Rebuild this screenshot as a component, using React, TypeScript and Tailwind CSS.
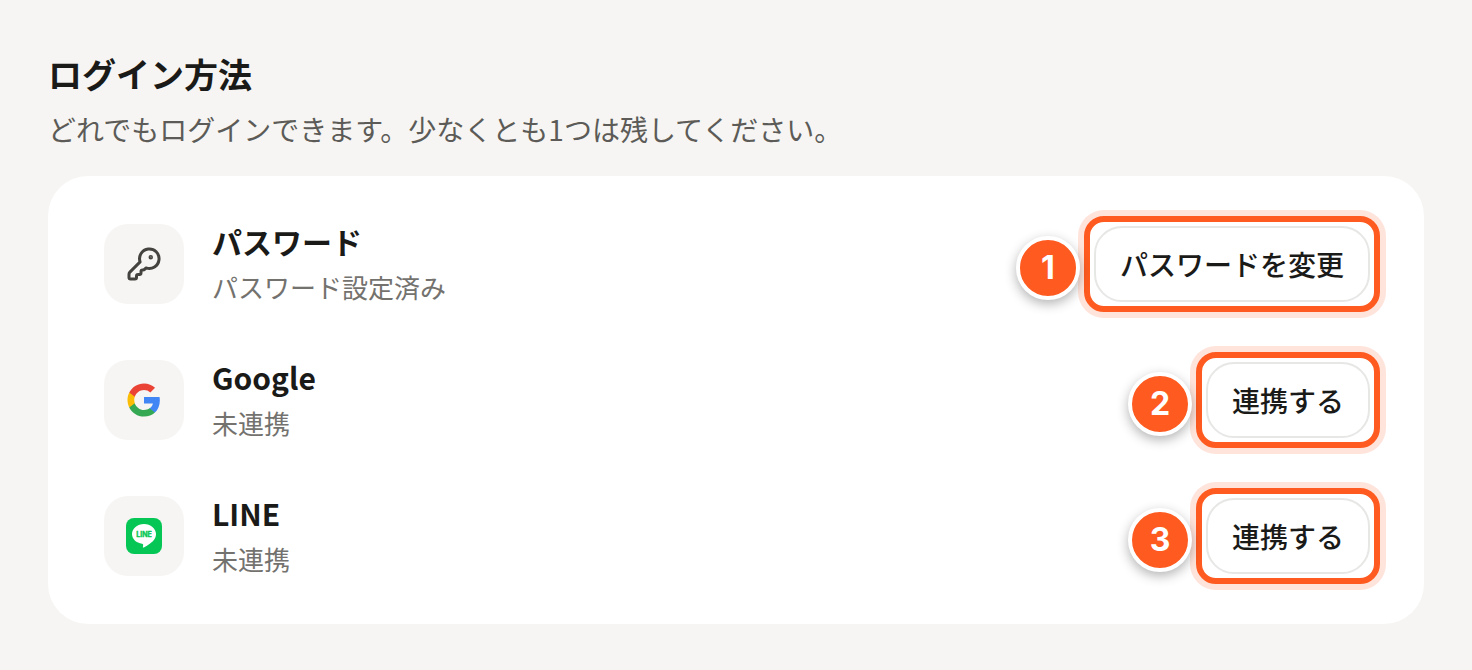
import type { ReactNode } from "react";
import { KeyRound } from "lucide-react";

interface LoginMethod {
  id: string;
  name: string;
  status: string;
  action: string;
  icon: ReactNode;
}

function GoogleIcon() {
  return (
    <svg viewBox="0 0 24 24" className="size-9" aria-hidden="true">
      <path
        fill="#4285F4"
        d="M22.56 12.25c0-.78-.07-1.53-.2-2.25H12v4.26h5.92c-.26 1.37-1.04 2.53-2.21 3.31v2.77h3.57c2.08-1.92 3.28-4.74 3.28-8.09z"
      />
      <path
        fill="#34A853"
        d="M12 23c2.97 0 5.46-.98 7.28-2.66l-3.57-2.77c-.98.66-2.23 1.06-3.71 1.06-2.86 0-5.29-1.93-6.16-4.53H2.18v2.84C3.99 20.53 7.7 23 12 23z"
      />
      <path
        fill="#FBBC05"
        d="M5.84 14.09c-.22-.66-.35-1.36-.35-2.09s.13-1.43.35-2.09V7.07H2.18C1.43 8.55 1 10.22 1 12s.43 3.45 1.18 4.93l3.66-2.84z"
      />
      <path
        fill="#EA4335"
        d="M12 5.38c1.62 0 3.06.56 4.21 1.64l3.15-3.15C17.45 2.09 14.97 1 12 1 7.7 1 3.99 3.47 2.18 7.07l3.66 2.84c.87-2.6 3.3-4.53 6.16-4.53z"
      />
    </svg>
  );
}

function LineIcon() {
  return (
    <svg viewBox="0 0 36 36" className="size-9" aria-hidden="true">
      <rect width="36" height="36" rx="8" fill="#06C755" />
      <path
        fill="#fff"
        d="M30 16C30 10.6 24.6 6 18 6S6 10.600 6 16c0 4.900 4.300 9 10.100 9.800 .4.1.9.3 1 .6.1.3.1.8 0 1.200l-.2 1.100c0 .3-.2 1.300 1.100.7 1.300-.6 7.100-4.200 9.700-7.200C29.300 20.200 30 18.200 30 16z"
      />
      <text
        x="18"
        y="19"
        textAnchor="middle"
        fill="#06C755"
        stroke="#06C755"
        strokeWidth="0.4"
        fontFamily="Inter, sans-serif"
        fontWeight="700"
        fontSize="7"
      >
        LINE
      </text>
    </svg>
  );
}

const methods: LoginMethod[] = [
  {
    id: "password",
    name: "パスワード",
    status: "パスワード設定済み",
    action: "パスワードを変更",
    icon: <KeyRound className="size-9 text-[#44433f]" aria-hidden="true" />,
  },
  {
    id: "google",
    name: "Google",
    status: "未連携",
    action: "連携する",
    icon: <GoogleIcon />,
  },
  {
    id: "line",
    name: "LINE",
    status: "未連携",
    action: "連携する",
    icon: <LineIcon />,
  },
];

// Action button with the orange guide frame and its step number
function GuidedAction({ step, method }: { step: number; method: LoginMethod }) {
  return (
    <div className="relative -my-2 shrink-0 rounded-[20px] border-6 border-[#ff5a1f] p-1 shadow-[0_0_0_6px_rgba(255,90,31,0.16)]">
      <button
        type="button"
        aria-describedby={`${method.id}-name`}
        className="block h-19 cursor-pointer rounded-[28px] border-2 border-[#e7e7e6] bg-white px-6 text-[28px] font-medium whitespace-nowrap text-[#1a1a18]"
      >
        {method.action}
      </button>
      <span className="absolute top-3.5 right-full mr-2.5 flex size-16 items-center justify-center rounded-full border-4 border-white bg-[#ff5a1f] font-['Inter',sans-serif] text-[32px] leading-none font-bold text-white shadow-[0_4px_12px_rgba(0,0,0,0.3)]">
        {step}
      </span>
    </div>
  );
}

export default function App() {
  return (
    <main
      lang="ja"
      className="min-h-screen bg-[#f6f5f3] p-12 font-['Noto_Sans_CJK_JP',sans-serif] text-[#1a1a18]"
    >
      <h1 className="text-[34px] leading-13 font-bold">ログイン方法</h1>
      <p className="mt-2 text-[28px] leading-[42px] text-[#5c5b57]">
        どれでもログインできます。少なくとも1つは残してください。
      </p>

      <ul className="mt-[26px] flex flex-col gap-14 rounded-[40px] bg-white py-12 pr-11 pl-14">
        {methods.map((method, i) => (
          <li key={method.id} className="flex items-center gap-7">
            <div className="flex size-20 shrink-0 items-center justify-center rounded-3xl bg-[#f6f5f3]">
              {method.icon}
            </div>
            <div className="flex min-w-0 flex-1 flex-col gap-3">
              <h2 id={`${method.id}-name`} className="text-[30px] leading-[34px] font-semibold">
                {method.name}
              </h2>
              <p className="text-[26px] leading-[34px] text-[#73726e]">{method.status}</p>
            </div>
            <GuidedAction step={i + 1} method={method} />
          </li>
        ))}
      </ul>
    </main>
  );
}
